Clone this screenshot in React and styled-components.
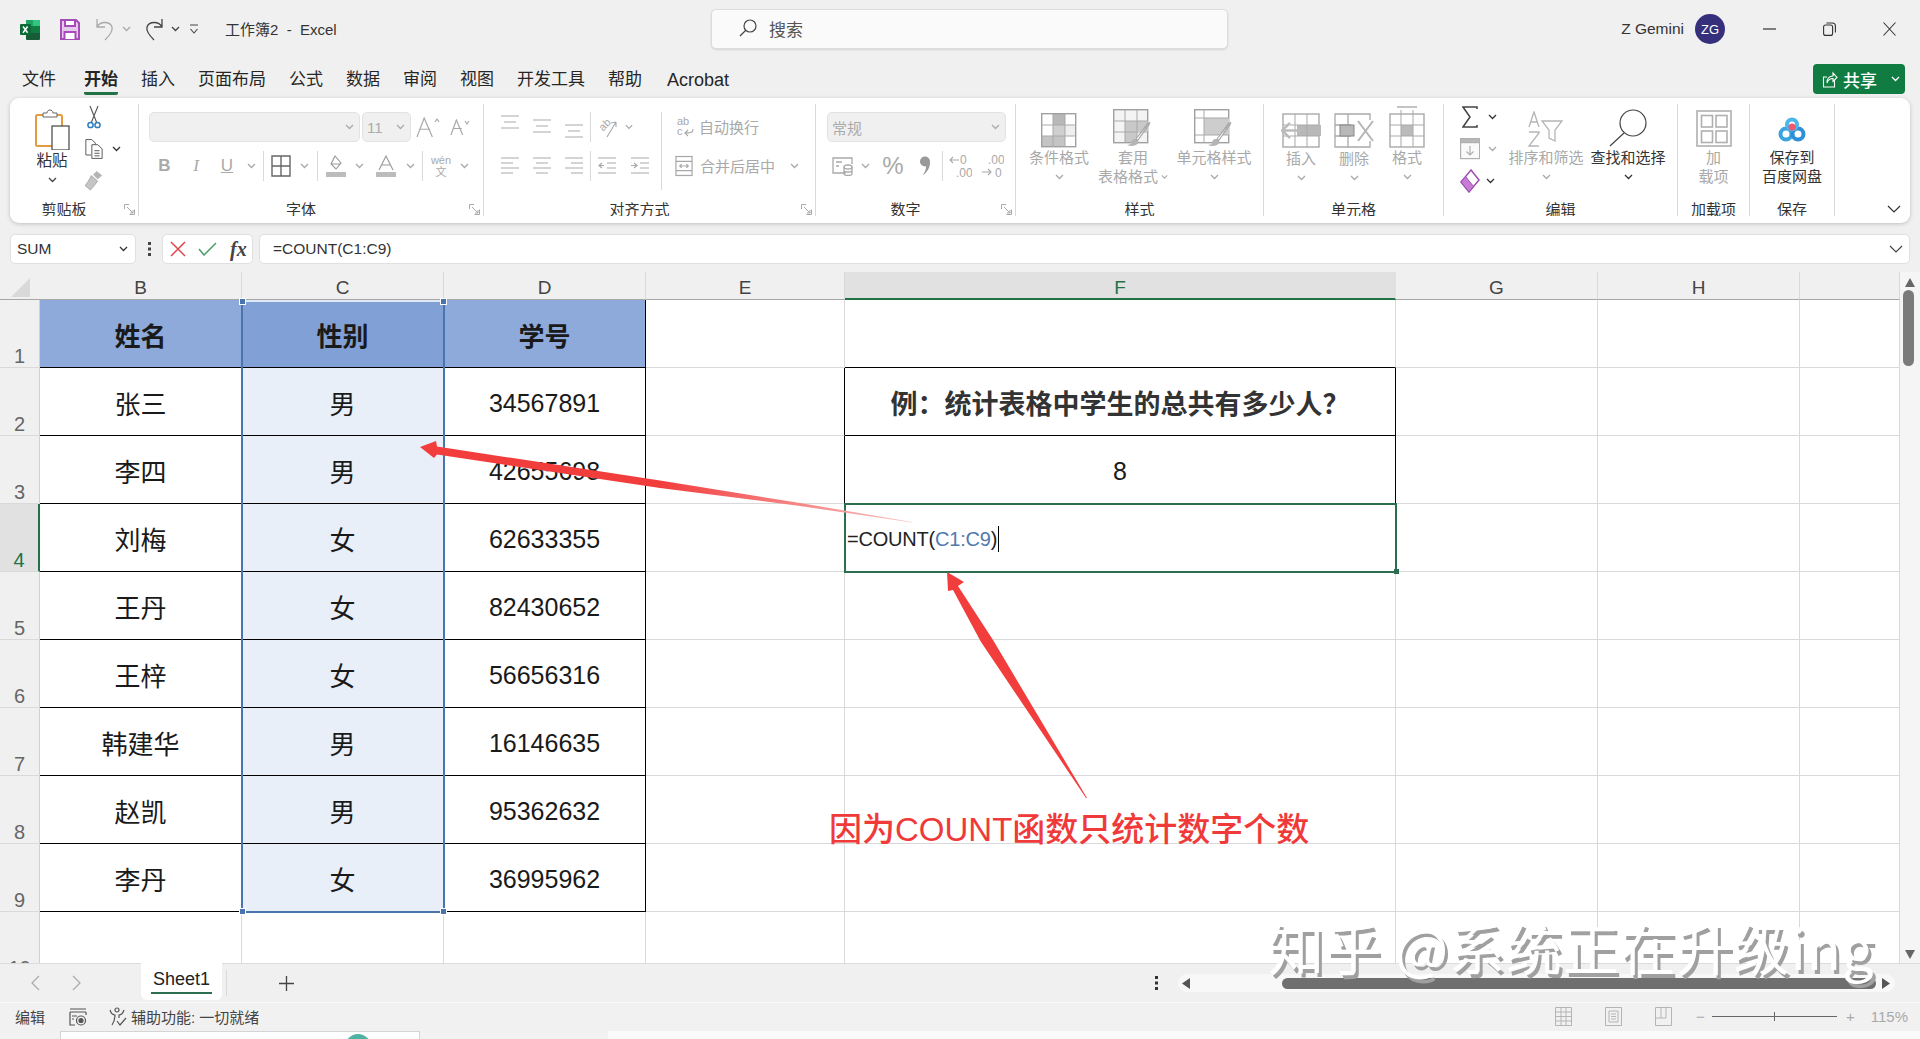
import React from 'react';
import styled, { createGlobalStyle } from 'styled-components';

const GlobalStyle = createGlobalStyle`
  html, body { margin: 0; padding: 0; background: #f0f0f0; }
  * { box-sizing: border-box; }
  body { font-family: "Liberation Sans", "Noto Sans CJK SC", sans-serif; color: #333; }
`;

const Page = styled.div`
  position: relative;
  width: 1920px;
  height: 1039px;
  overflow: hidden;
  display: flex;
  flex-direction: column;
  background: #f0f0f0;
`;

/* ---------- title bar ---------- */
const TitleBar = styled.div`
  height: 60px;
  flex: none;
  display: flex;
  align-items: center;
  padding-bottom: 2px;
`;
const Slot = styled.div`
  width: ${p => p.$w}px;
  flex: none;
  display: flex;
  align-items: center;
  justify-content: center;
  color: ${p => (p.$off ? '#a9a9a9' : '#444')};
`;
const Spacer = styled.div`
  width: ${p => p.$w}px;
  flex: none;
`;
const Title = styled.span`
  width: 486px;
  flex: none;
  font-size: 15px;
  color: #333;
  white-space: pre;
  margin-top: -2px;
`;
const SearchBox = styled.div`
  width: 517px;
  height: 40px;
  flex: none;
  display: flex;
  align-items: center;
  gap: 12px;
  padding: 0 0 2px 27px;
  background: #fafafa;
  border: 1px solid #dcdcdc;
  border-radius: 5px;
  box-shadow: 0 1px 2px rgba(0, 0, 0, 0.12);
  font-size: 17px;
  color: #555;
`;
const UserName = styled.span`
  width: 456px;
  flex: none;
  text-align: right;
  font-size: 15.5px;
  color: #333;
`;
const Avatar = styled.div`
  width: 30px;
  height: 30px;
  flex: none;
  margin-left: 11px;
  border-radius: 50%;
  background: #352f7c;
  color: #fff;
  font-size: 13px;
  display: flex;
  align-items: center;
  justify-content: center;
`;

/* ---------- tab row ---------- */
const TabRow = styled.div`
  height: 38px;
  flex: none;
  display: flex;
  padding-left: 22px;
  position: relative;
`;
const Tab = styled.div`
  margin-right: ${p => p.$gap || 23}px;
  padding-top: 8px;
  font-size: ${p => p.$size || 17}px;
  line-height: 24px;
  color: #262626;
  font-weight: ${p => (p.$active ? 700 : 400)};
  border-bottom: ${p => (p.$active ? '3px solid #217346' : 'none')};
  height: ${p => (p.$active ? '35px' : '38px')};
  border-radius: 0 0 2px 2px;
`;
const ShareButton = styled.div`
  position: absolute;
  right: 15px;
  top: 4px;
  width: 92px;
  height: 30px;
  display: flex;
  align-items: center;
  gap: 5px;
  padding-left: 9px;
  background: #107c41;
  border-radius: 4px;
  color: #fff;
  font-size: 17px;
  font-weight: 500;
`;

/* ---------- ribbon ---------- */
const Ribbon = styled.div`
  height: 125px;
  flex: none;
  margin: 0 10px;
  padding: 6px 0 7px;
  display: flex;
  background: #fff;
  border-radius: 9px;
  box-shadow: 0 1px 4px rgba(0, 0, 0, 0.2);
`;
const Group = styled.div`
  width: ${p => p.$w}px;
  height: 112px;
  flex: ${p => (p.$last ? '1' : 'none')};
  overflow: hidden;
  display: flex;
  flex-direction: column;
  border-right: ${p => (p.$last ? 'none' : '1px solid #d9d9d9')};
`;
const GroupBody = styled.div`
  height: 96px;
  flex: none;
  display: flex;
`;
const GroupLabelRow = styled.div`
  height: 18px;
  flex: none;
  display: flex;
  align-items: center;
  justify-content: ${p => (p.$end ? 'flex-end' : 'flex-start')};
  padding-right: ${p => (p.$end ? '8px' : '0')};
`;
const GroupLabel = styled.div`
  flex: 1;
  text-align: center;
  font-size: 15px;
  line-height: 18px;
  padding-top: 1px;
  color: #333;
`;
const Launcher = styled.div`
  width: 20px;
  flex: none;
  display: flex;
  justify-content: center;
  color: #a9a9a9;
  padding-left: 2px;
`;
const Stack = styled.div`
  display: flex;
  flex-direction: column;
  gap: ${p => p.$gap}px;
  padding-top: ${p => p.$top}px;
  width: ${p => (p.$w ? `${p.$w}px` : 'auto')};
  flex: none;
`;
const ToolRow = styled.div`
  height: ${p => p.$h || 30}px;
  display: flex;
  align-items: center;
`;
const Combo = styled.div`
  width: ${p => p.$w}px;
  height: 30px;
  flex: none;
  margin-right: ${p => p.$mr || 0}px;
  display: flex;
  align-items: center;
  justify-content: space-between;
  padding: 0 5px 0 4px;
  background: #f0f0f0;
  border: 1px solid #e2e2e2;
  border-radius: 5px;
  color: #ababab;
  font-size: 15px;
`;
const Sep = styled.div`
  width: 1px;
  height: ${p => p.$h || 30}px;
  flex: none;
  margin: 0 ${p => p.$mr || 0}px 0 ${p => p.$ml || 0}px;
  background: #d9d9d9;
  align-self: ${p => (p.$top ? 'flex-start' : 'center')};
`;
const ToolText = styled.span`
  font-size: 15px;
  color: #a9a9a9;
  white-space: nowrap;
  margin-top: -2px;
`;
const BigButton = styled.div`
  width: ${p => p.$w}px;
  flex: none;
  display: flex;
  flex-direction: column;
  align-items: center;
  padding-top: ${p => p.$top ?? 4}px;
  padding-left: ${p => p.$pl || 0}px;
  color: ${p => (p.$off ? '#a9a9a9' : '#333')};
`;
const BigIcon = styled.div`
  height: ${p => p.$h || 40}px;
  flex: none;
  display: flex;
  align-items: center;
  justify-content: center;
  color: ${p => (p.$off ? '#a9a9a9' : '#444')};
`;
const BigLabel = styled.div`
  font-size: ${p => p.$size || 15}px;
  line-height: ${p => p.$lh || 19}px;
  height: ${p => p.$lh || 19}px;
  white-space: nowrap;
  display: flex;
  align-items: center;
  justify-content: center;
  gap: 3px;
`;
const FontMark = styled(Slot)`
  font-size: 17px;
  font-weight: ${p => (p.$bold ? 700 : 400)};
  font-style: ${p => (p.$italic ? 'italic' : 'normal')};
  font-family: ${p => (p.$italic ? '"Liberation Serif", serif' : 'inherit')};
  text-decoration: ${p => (p.$under ? 'underline' : 'none')};
`;
const PhoneticMark = styled(Slot)`
  flex-direction: column;
  font-size: 11px;
  line-height: 12px;
`;
const PercentMark = styled(Slot)`
  font-size: 24px;
`;

/* ---------- formula bar ---------- */
const FormulaBar = styled.div`
  height: 30px;
  flex: none;
  margin: 11px 10px 8px;
  display: flex;
`;
const NameBox = styled.div`
  width: 126px;
  flex: none;
  display: flex;
  align-items: center;
  justify-content: space-between;
  padding: 0 6px;
  background: #fff;
  border: 1px solid #e0e0e0;
  border-radius: 5px;
  font-size: 15.5px;
  color: #333;
`;
const Grip = styled.div`
  width: 26px;
  flex: none;
  display: flex;
  align-items: center;
  justify-content: center;
  color: #444;
`;
const FxBox = styled.div`
  width: 91px;
  flex: none;
  display: flex;
  align-items: center;
  padding-left: 7px;
  gap: 12px;
  background: #fff;
  border: 1px solid #e0e0e0;
  border-radius: 5px;
`;
const FxMark = styled.span`
  font-family: "Liberation Serif", serif;
  font-style: italic;
  font-weight: 700;
  font-size: 20px;
  color: #444;
  margin-left: 1px;
`;
const FormulaInput = styled.div`
  flex: 1;
  margin-left: 6px;
  display: flex;
  align-items: center;
  justify-content: space-between;
  padding: 0 6px 0 13px;
  background: #fff;
  border: 1px solid #e0e0e0;
  border-radius: 5px;
  font-size: 15.5px;
  color: #333;
`;

/* ---------- sheet ---------- */
const SheetArea = styled.div`
  height: 691px;
  flex: none;
  display: flex;
  overflow: hidden;
`;
const SheetGrid = styled.div`
  position: relative;
  width: 1900px;
  flex: none;
  display: grid;
  grid-template-columns: 40px 202px 202px 202px 199px 551px 202px 202px 100px;
  grid-template-rows: 28px repeat(10, 68px);
  background: #fff;
`;
const Corner = styled.div`
  background: #f0f0f0;
  border-bottom: 1px solid #a6a6a6;
  display: flex;
  align-items: flex-end;
  justify-content: center;
  padding-bottom: 2px;
`;
const ColHead = styled.div`
  display: flex;
  align-items: center;
  justify-content: center;
  font-size: 19px;
  padding-top: 5px;
  color: ${p => (p.$active ? '#217346' : '#444')};
  background: ${p => (p.$active ? '#e1e1e1' : '#f0f0f0')};
  border-right: 1px solid ${p => (p.$active ? '#e1e1e1' : '#d9d9d9')};
  border-bottom: ${p => (p.$active ? '2px solid #217346' : '1px solid #a6a6a6')};
`;
const RowHead = styled.div`
  display: flex;
  align-items: flex-end;
  justify-content: center;
  font-size: 20px;
  line-height: 22px;
  color: ${p => (p.$active ? '#217346' : '#666')};
  background: ${p => (p.$active ? '#e1e1e1' : '#f0f0f0')};
  border-right: ${p => (p.$active ? '2px solid #217346' : '1px solid #d0d0d0')};
  border-bottom: 1px solid #d9d9d9;
`;
const Cell = styled.div`
  display: flex;
  align-items: center;
  justify-content: center;
  padding-top: ${p => (p.$num ? 4 : 2)}px;
  font-size: ${p => (p.$num ? 25 : 26)}px;
  font-weight: ${p => (p.$head ? 700 : 400)};
  color: #1a1a1a;
  background: ${p => p.$bg || '#fff'};
  border-right: 1px solid ${p => (p.$right ? '#000' : '#d9d9d9')};
  border-bottom: 1px solid ${p => (p.$bottom ? '#000' : '#d9d9d9')};
`;
const QuestionText = styled.span`
  font-weight: 700;
  font-size: 27px;
  color: #333;
  white-space: nowrap;
`;
const ActiveCell = styled.div`
  position: relative;
  z-index: 2;
  display: flex;
  align-items: center;
  padding: 2px 0 0 2px;
  font-size: 20px;
  letter-spacing: -0.2px;
  color: #222;
  background: #fff;
  outline: 2px solid #2c6e50;
  outline-offset: -1px;
`;
const RefText = styled.span`
  color: #4f79ad;
`;
const Caret = styled.span`
  width: 1px;
  height: 26px;
  margin-left: 1px;
  background: #000;
`;
const FillHandle = styled.i`
  position: absolute;
  right: -3px;
  bottom: -2px;
  width: 5px;
  height: 5px;
  background: #2c6e50;
`;
const Selection = styled.div`
  position: absolute;
  left: 241px;
  top: 28px;
  width: 204px;
  height: 613px;
  z-index: 1;
  pointer-events: none;
  border: 2px solid #4a74ad;
  border-top-color: #dfe8f6;
`;
const SelHandle = styled.i`
  position: absolute;
  width: 7px;
  height: 7px;
  background: #4a74ad;
  border: 1px solid #fff;
  left: ${p => (p.$side === 'l' ? '-4px' : 'auto')};
  right: ${p => (p.$side === 'r' ? '-4px' : 'auto')};
  top: ${p => (p.$pos === 't' ? '-4px' : 'auto')};
  bottom: ${p => (p.$pos === 'b' ? '-4px' : 'auto')};
`;
const VScroll = styled.div`
  width: 20px;
  flex: none;
  display: flex;
  flex-direction: column;
  align-items: center;
  background: #f5f5f5;
  padding-top: 6px;
`;
const VThumb = styled.div`
  width: 11px;
  height: 76px;
  margin-top: 3px;
  margin-left: -3px;
  border-radius: 6px;
  background: #7b7b7b;
`;
const ArrowMark = styled.div`
  margin-top: ${p => (p.$push ? 'auto' : '0')};
  margin-bottom: ${p => (p.$push ? '4px' : '0')};
  display: flex;
  color: #666;
`;

/* ---------- sheet tabs, status ---------- */
const SheetBar = styled.div`
  height: 40px;
  flex: none;
  display: flex;
  align-items: center;
  border-top: 1px solid #dcdcdc;
  border-bottom: 1px solid #fafafa;
  background: #f0f0f0;
`;
const SheetTab = styled.div`
  width: 81px;
  height: 37px;
  flex: none;
  align-self: flex-start;
  margin-top: -1px;
  position: relative;
  display: flex;
  justify-content: center;
  padding-top: 4px;
  background: #fff;
  border-radius: 0 0 6px 6px;
  font-size: 18px;
  line-height: 24px;
  color: #222;
`;
const TabMark = styled.i`
  position: absolute;
  left: 10px;
  right: 10px;
  bottom: 6px;
  height: 2px;
  background: #2c6e50;
`;
const HTrack = styled.div`
  width: 717px;
  height: 18px;
  flex: none;
  display: flex;
  align-items: center;
  border-radius: 9px;
  background: #f8f8f8;
  color: #555;
`;
const HThumb = styled.div`
  width: 594px;
  height: 11px;
  flex: none;
  border-radius: 6px;
  background: #6f6f6f;
`;
const StatusBar = styled.div`
  height: 28px;
  flex: none;
  display: flex;
  align-items: center;
  background: #f1f1f1;
  font-size: 15px;
  padding-bottom: 1px;
  color: #444;
`;
const ZoomTrack = styled.div`
  width: 125px;
  height: 1px;
  flex: none;
  position: relative;
  background: #666;
  margin: 0 6px;
`;
const ZoomTick = styled.i`
  position: absolute;
  left: 62px;
  top: -4px;
  width: 1px;
  height: 9px;
  background: #666;
`;
const TaskStrip = styled.div`
  height: 8px;
  flex: none;
  position: relative;
  display: flex;
  background: linear-gradient(to right, #f2f2f2 608px, #fafafa 608px);
  overflow: hidden;
`;
const TaskWindow = styled.div`
  width: 360px;
  margin-left: 60px;
  flex: none;
  position: relative;
  background: #fff;
  border: 1px solid #d5d5d5;
  border-bottom: none;
`;
const TaskRing = styled.i`
  position: absolute;
  left: 284px;
  top: 2px;
  width: 26px;
  height: 26px;
  border-radius: 50%;
  border: 5px solid #4fb3a4;
`;

/* ---------- annotations ---------- */
const Annotations = styled.svg`
  position: absolute;
  inset: 0;
  z-index: 5;
  pointer-events: none;
`;
const RedNote = styled.div`
  position: absolute;
  left: 829px;
  top: 808px;
  z-index: 6;
  font-size: 33px;
  line-height: 44px;
  font-weight: 500;
  color: #f03a3a;
  white-space: nowrap;
`;
const Watermark = styled.div`
  position: absolute;
  left: 1268px;
  top: 908px;
  z-index: 7;
  font-family: "Noto Sans CJK SC", sans-serif;
  font-size: 56px;
  line-height: 76px;
  letter-spacing: 0.9px;
  color: #fff;
  white-space: pre;
  text-shadow: 3px 4px 0 #a0a0a0;
`;

/* ---------- icons ---------- */
const Chev = ({ w = 9 }) => (
  <svg width={w} height="6" viewBox="0 0 9 6" fill="none" stroke="currentColor" strokeWidth="1.3"><path d="M1 1l3.5 3.5L8 1" /></svg>
);
const CornerMark = () => (
  <svg width="11" height="11" viewBox="0 0 11 11" fill="none" stroke="currentColor"><path d="M10.5 5.5v5h-5M.5 5V.5H5M3 3l6 6M9 6v3H6" /></svg>
);
const ExcelLogo = () => (
  <svg width="20" height="21" viewBox="0 0 20 21">
    <path d="M6 1h9l5 0v6h-14z" fill="#21a366" />
    <path d="M6 7h14v7H6z" fill="#107c41" />
    <path d="M6 14h14v6a1 1 0 0 1-1 1H7a1 1 0 0 1-1-1z" fill="#185c37" />
    <path d="M13 1h6a1 1 0 0 1 1 1v5h-7z" fill="#33c481" />
    <rect x="0" y="5" width="11" height="11" rx="1" fill="#0b6a37" />
    <path d="M3 7.5l4.6 6.2M7.6 7.5L3 13.7" stroke="#fff" strokeWidth="1.5" />
  </svg>
);
const SaveIcon = () => (
  <svg width="20" height="21" viewBox="0 0 20 21" fill="none" stroke="#a64cb9" strokeWidth="2"><path d="M1 1h15l3 3v16H1z" fill="#e8c9ee" /><path d="M5 1h10v6H5z" fill="#fff" /><path d="M4.5 20v-7h11v7" fill="#fff" /></svg>
);
const UndoIcon = ({ flip }) => (
  <svg width="20" height="24" viewBox="0 0 20 24" fill="none" stroke="currentColor" strokeWidth="1.3" style={flip ? { transform: 'scaleX(-1)' } : undefined}>
    <path d="M2 2v8h8M2 10c3-6 13-6 15 0 1 4-2 8-7 13" />
  </svg>
);
const QatIcon = () => (
  <svg width="10" height="11" viewBox="0 0 10 11" fill="none" stroke="#444" strokeWidth="1.1"><path d="M1 1h8M1.5 5l3.5 4 3.5-4" /></svg>
);
const SearchIcon = ({ size = 18 }) => (
  <svg width={size} height={size} viewBox="0 0 18 18" fill="none" stroke="#444" strokeWidth="1.2"><circle cx="11" cy="7" r="6" /><path d="M6.8 11.3L1 17" /></svg>
);
const MinIcon = () => <svg width="13" height="2" viewBox="0 0 13 2"><path d="M0 1h13" stroke="#333" strokeWidth="1.2" /></svg>;
const RestoreIcon = () => (
  <svg width="13" height="14" viewBox="0 0 13 14" fill="none" stroke="#333" strokeWidth="1.1"><rect x=".6" y="3" width="9" height="10.4" rx="2" /><path d="M3.4 1h6a3 3 0 0 1 3 3v6.4" /></svg>
);
const CloseIcon = () => (
  <svg width="13" height="14" viewBox="0 0 13 14" stroke="#333" strokeWidth="1.1"><path d="M.5.5l12 13M12.500.5l-12 13" /></svg>
);
const ShareIcon = () => (
  <svg width="16" height="17" viewBox="0 0 16 17" fill="none" stroke="#fff" strokeWidth="1.1"><path d="M5 6H1.500v10h11V9M5 12c0-4 2-7 6-7V2l4 4.500-4 4V7.500c-3 0-5 1.500-6 4.500z" /></svg>
);
const PasteIcon = () => (
  <svg width="35" height="42" viewBox="0 0 35 42" fill="none">
    <rect x="1" y="7" width="26" height="31" rx="1.500" fill="#fff" stroke="#e39b3e" strokeWidth="2" />
    <path d="M8 7V5h4c0-4 6-4 6 0h4v4H8z" fill="#fff" stroke="#666" />
    <rect x="17" y="18" width="17" height="24" fill="#fff" stroke="#444" strokeWidth="1.200" />
  </svg>
);
const CutIcon = () => (
  <svg width="14" height="24" viewBox="0 0 14 24" fill="none"><path d="M3 1l6.500 16M11 1L4.500 17" stroke="#555" strokeWidth="1.100" /><circle cx="3.500" cy="20" r="2.600" stroke="#2f7dbd" strokeWidth="1.500" /><circle cx="10.500" cy="20" r="2.600" stroke="#2f7dbd" strokeWidth="1.500" /></svg>
);
const CopyIcon = () => (
  <svg width="21" height="24" viewBox="0 0 21 24" fill="none" stroke="#555" strokeWidth="1.100"><path d="M7 19H1V1h7l4 4v2" /><path d="M8 7h7l5 5v11H8zM11 14h6M11 17h6M11 20h6" fill="#fff" /></svg>
);
const BrushIcon = () => (
  <svg width="20" height="22" viewBox="0 0 20 22" fill="#b5b5b5"><path d="M13 0l6 5-5 4-5-5z" /><path d="M7 5l7 6c-2 3-5 7-8 10L0 16c3-3 5-7 7-11z" fill="#c5c5c5" stroke="#999" strokeWidth=".8" /></svg>
);
const GrowA = ({ size, up }) => (
  <svg width={size + 8} height={size + 2} viewBox={`0 0 ${size + 8} ${size + 2}`} fill="none" stroke="currentColor" strokeWidth="1.200">
    <path d={`M1 ${size + 2}L${size / 2.2} 1l${size / 2.2} ${size + 1}M4 ${size * 0.68}h${size / 1.8}`} />
    <path d={up ? `M${size + 1} 5l2-3 2 3` : `M${size + 1} 2l2 3 2-3`} />
  </svg>
);
const BorderIcon = () => (
  <svg width="20" height="22" viewBox="0 0 20 22" fill="none" stroke="#666" strokeWidth="1.400"><path d="M1 1h18v20H1zM10 1v20M1 11h18" /></svg>
);
const FillIcon = () => (
  <svg width="20" height="22" viewBox="0 0 20 22" fill="none" stroke="#999" strokeWidth="1.100"><path d="M9 1l6 7-5 6-5-5zM5 9h9" /><rect x="0" y="17" width="20" height="5" fill="#bcbcbc" stroke="none" /></svg>
);
const ColorA = () => (
  <svg width="20" height="22" viewBox="0 0 20 22" fill="none" stroke="#999" strokeWidth="1.100"><path d="M3 15L10 1l7 14M6 10h8" /><rect x="0" y="17" width="20" height="5" fill="#bcbcbc" stroke="none" /></svg>
);
const VAlign = ({ y }) => (
  <svg width="18" height="24" viewBox="0 0 18 24" fill="none" stroke="currentColor" strokeWidth="1.200">
    <path d={`M0 ${y}h18M3 ${y + 6}h12M0 ${y + 12}h18`} />
  </svg>
);
const AlignRows = ({ side }) => {
  const x = side === 'l' ? 0 : side === 'c' ? 3 : 6;
  return (
    <svg width="18" height="20" viewBox="0 0 18 20" fill="none" stroke="currentColor" strokeWidth="1.200">
      <path d={`M0 2h18M${x} 7h12M0 12h18M${x} 17h12`} />
    </svg>
  );
};
const OrientIcon = () => (
  <svg width="22" height="24" viewBox="0 0 22 24" fill="none" stroke="currentColor" strokeWidth="1.100">
    <path d="M10 22l9-15M19 7l-5 1M19 7v5" />
    <text x="2" y="15" fontSize="11" fontFamily="Liberation Sans" fill="currentColor" stroke="none" transform="rotate(-45 6 11)">ab</text>
  </svg>
);
const IndentIcon = ({ right }) => (
  <svg width="18" height="20" viewBox="0 0 18 20" fill="none" stroke="currentColor" strokeWidth="1.200">
    <path d="M0 2h18M9 7h9M9 12h9M0 17h18" />
    <path d={right ? 'M0 9.500h5M3 7l3 2.500L3 12' : 'M6 9.500H1M4 7L1 9.500 4 12'} />
  </svg>
);
const WrapIcon = () => (
  <svg width="18" height="22" viewBox="0 0 18 22" fill="none" stroke="currentColor" strokeWidth="1.100">
    <path d="M16 13c0 4-3 4-8 4M11 14l-3 3 3 3" />
    <text x="0" y="9" fontSize="11" fontFamily="Liberation Sans" fill="currentColor" stroke="none">ab</text>
    <text x="0" y="19" fontSize="11" fontFamily="Liberation Sans" fill="currentColor" stroke="none">c</text>
  </svg>
);
const MergeIcon = () => (
  <svg width="19" height="22" viewBox="0 0 19 22" fill="none" stroke="currentColor" strokeWidth="1.300">
    <rect x="1" y="1" width="17" height="20" /><path d="M1 6h17M1 16h17M5 11h9M7 9l-2 2 2 2M12 9l2 2-2 2" />
  </svg>
);
const AccountIcon = () => (
  <svg width="21" height="20" viewBox="0 0 21 20" fill="none" stroke="currentColor" strokeWidth="1.300">
    <path d="M14 17H1V2h19v6M4 6h6M4 10h3" /><ellipse cx="16" cy="11" rx="4" ry="2" /><path d="M12 11v7c0 2 8 2 8 0v-7M12 14.500c0 2 8 2 8 0" />
  </svg>
);
const CommaIcon = () => (
  <svg width="12" height="20" viewBox="0 0 12 20" fill="#999"><circle cx="6" cy="5.500" r="5" /><path d="M11 5.500c.5 6-3 11-7.500 14 2.500-3.500 3.500-6 3.500-9z" /></svg>
);
const DecimalIcon = ({ more }) => (
  <svg width="24" height="26" viewBox="0 0 24 26" fill="none" stroke="currentColor" strokeWidth="1.100">
    <text x={more ? 8 : 12} y="11" fontSize="12" fontFamily="Liberation Sans" fill="currentColor" stroke="none">{more ? '.00' : '0'}</text>
    <text x={more ? 15 : 8} y="24" fontSize="12" fontFamily="Liberation Sans" fill="currentColor" stroke="none">{more ? '0' : '.00'}</text>
    <path d={more ? 'M2 19h9M8 16l3 3-3 3' : 'M11 7H2M5 4L2 7l3 3'} />
  </svg>
);
const StylePaint = () => (
  <g>
    <path d="M36 14L23 32" stroke="#a9a9a9" strokeWidth="3" fill="none" />
    <path d="M37 13l-12 18-2-1z" fill="#fff" stroke="#a9a9a9" />
    <path d="M22 30c-3 0-4 2-4 5l-4 1c4 2 10 1 12-3z" fill="#b5b5b5" />
  </g>
);
const CondIcon = () => (
  <svg width="36" height="35" viewBox="0 0 36 35" fill="none">
    <rect x="12" y="1" width="12" height="11" fill="#b8b8b8" />
    <rect x="12" y="12" width="12" height="11" fill="#cfcfcf" />
    <rect x="1" y="23" width="23" height="11" fill="#c4c4c4" />
    <rect x="24" y="12" width="11" height="11" fill="#efefef" />
    <rect x=".7" y=".7" width="34" height="33" stroke="#a0a0a0" strokeWidth="1.400" />
    <path d="M12 1v33M24 1v33M1 12h34M1 23h34" stroke="#a9a9a9" />
  </svg>
);
const TableStyleIcon = () => (
  <svg width="40" height="42" viewBox="0 0 40 42" fill="none">
    <rect x=".7" y=".7" width="34" height="33" fill="#f4f4f4" stroke="#a0a0a0" strokeWidth="1.400" />
    <rect x="12" y="12" width="23" height="10" fill="#c9c9c9" />
    <rect x="12" y="22" width="12" height="11" fill="#c9c9c9" />
    <path d="M12 1v33M24 1v33M1 12h34M1 23h34" stroke="#a9a9a9" />
    <StylePaint />
  </svg>
);
const CellStyleIcon = () => (
  <svg width="40" height="42" viewBox="0 0 40 42" fill="none">
    <rect x=".7" y=".7" width="34" height="33" fill="#fff" stroke="#a0a0a0" strokeWidth="1.400" />
    <rect x="10" y="9" width="25" height="17" fill="#cdcdcd" />
    <path d="M1 9h34M10 1v33M1 26h34" stroke="#a9a9a9" />
    <StylePaint />
  </svg>
);
const InsertCells = () => (
  <svg width="40" height="36" viewBox="0 0 40 36" fill="none">
    <rect x="2" y="1" width="36" height="33" stroke="#a9a9a9" strokeWidth="1.400" />
    <rect x="16" y="12" width="24" height="11" fill="#b8b8b8" />
    <path d="M14 1v33M26 1v33M2 12h36M2 23h36" stroke="#a9a9a9" />
    <path d="M20 17.500H2M9 10l-8 7.500L9 25" stroke="#bbb" strokeWidth="2.500" fill="#fff" />
  </svg>
);
const DeleteCells = () => (
  <svg width="40" height="36" viewBox="0 0 40 36" fill="none">
    <path d="M26 1H1v33h25M26 1h10v6M36 28v6H26M1 12h16M1 23h16M14 1v33" stroke="#a9a9a9" strokeWidth="1.300" />
    <rect x="6" y="12" width="14" height="11" fill="#b8b8b8" stroke="#888" />
    <path d="M24 8l15 20M39 8L24 28" stroke="#b5b5b5" strokeWidth="2" />
  </svg>
);
const FormatCells = () => (
  <svg width="36" height="44" viewBox="0 0 36 44" fill="none">
    <path d="M8 2h20" stroke="#a9a9a9" strokeWidth="1.400" />
    <rect x="1" y="9" width="34" height="33" stroke="#a9a9a9" strokeWidth="1.400" />
    <rect x="12" y="20" width="12" height="11" fill="#bbb" />
    <path d="M12 5v37M24 5v37M1 20h34M1 31h34" stroke="#a9a9a9" />
  </svg>
);
const SigmaIcon = () => (
  <svg width="16" height="22" viewBox="0 0 16 22" fill="none" stroke="#444" strokeWidth="1.500"><path d="M15 3V1H1l7 10-7 10h14v-2" /></svg>
);
const FillDown = () => (
  <svg width="20" height="22" viewBox="0 0 20 22" fill="none" stroke="#b0b0b0" strokeWidth="1.200"><rect x=".6" y=".6" width="19" height="20" fill="#fafafa" /><rect x=".6" y=".6" width="19" height="4" fill="#b8b8b8" /><path d="M10 8v9M6.500 13.500L10 17l3.500-3.500" /></svg>
);
const EraserIcon = () => (
  <svg width="20" height="24" viewBox="0 0 20 24" fill="none"><path d="M11 1l8 10-10 12-8-10z" fill="#fff" stroke="#9c4fb0" strokeWidth="1.500" /><path d="M5.500 7.500l8 10L9 23 1 13z" fill="#c77bd6" stroke="#9c4fb0" strokeWidth="1" /></svg>
);
const SortIcon = () => (
  <svg width="36" height="36" viewBox="0 0 36 36" fill="none" stroke="#b5b5b5" strokeWidth="1.300">
    <path d="M1 16L6 1l5 15M3 11h6M1 21h10v1L1 35h10" />
    <path d="M14 10h20l-7 9v11l-6 -3v-8z" fill="#fff" />
  </svg>
);
const FindIcon = () => (
  <svg width="38" height="38" viewBox="0 0 38 38" fill="none" stroke="#444" strokeWidth="1.200"><circle cx="24" cy="14" r="13" /><path d="M15 24L1 37" /></svg>
);
const AddinIcon = () => (
  <svg width="36" height="37" viewBox="0 0 36 37" fill="none" stroke="#b0b0b0" strokeWidth="1.600"><rect x="1" y="1" width="34" height="35" /><rect x="5.500" y="5.500" width="11" height="11.500" /><rect x="20" y="5.500" width="11" height="11.500" /><rect x="5.500" y="21" width="11" height="11.500" /><rect x="20" y="21" width="11" height="11.500" /></svg>
);
const BaiduIcon = () => (
  <svg width="28" height="26" viewBox="0 0 28 26" fill="none" strokeWidth="4">
    <circle cx="8" cy="17" r="5.500" stroke="#3aa4e0" />
    <circle cx="20" cy="17" r="5.500" stroke="#2c8fd8" />
    <circle cx="14" cy="7.500" r="5" stroke="#4cb7e8" />
    <circle cx="14" cy="10" r="3.500" fill="#f0566e" stroke="none" />
  </svg>
);
const CrossIcon = () => <svg width="16" height="16" viewBox="0 0 16 16" stroke="#e0474c" strokeWidth="1.500"><path d="M1 1l14 14M15 1L1 15" /></svg>;
const CheckIcon = () => <svg width="19" height="14" viewBox="0 0 19 14" fill="none" stroke="#4b9e6a" strokeWidth="1.500"><path d="M1 7l5 6L18 1" /></svg>;
const GripIcon = ({ c }) => (
  <svg width="3" height="14" viewBox="0 0 3 14" fill={c || 'currentColor'}><rect width="3" height="3" /><rect y="5.500" width="3" height="3" /><rect y="11" width="3" height="3" /></svg>
);
const SmallTriangle = ({ d }) => {
  const paths = { u: 'M5 0l5 9H0z', d: 'M0 0h10L5 9z', l: 'M8 0v11L0 5.500z', r: 'M0 0l8 5.500L0 11z' };
  const horizontal = d === 'l' || d === 'r';
  return (
    <svg width={horizontal ? 8 : 10} height={horizontal ? 11 : 9} viewBox={horizontal ? '0 0 8 11' : '0 0 10 9'} fill="currentColor"><path d={paths[d]} /></svg>
  );
};
const Angle = ({ left }) => (
  <svg width="9" height="16" viewBox="0 0 9 16" fill="none" stroke="#aaa" strokeWidth="1.200"><path d={left ? 'M8 1L1 8l7 7' : 'M1 1l7 7-7 7'} /></svg>
);
const PlusIcon = () => <svg width="15" height="15" viewBox="0 0 15 15" stroke="#444" strokeWidth="1.300"><path d="M7.500 0v15M0 7.500h15" /></svg>;
const MacroIcon = () => (
  <svg width="18" height="18" viewBox="0 0 18 18" fill="none" stroke="#555" strokeWidth="1.200"><path d="M1 1h16M1 4h16M1 4v13h5M17 4v3M3 8h5M3 11h2" /><circle cx="12" cy="12.500" r="4.500" /><circle cx="12" cy="12.500" r="2" fill="#555" /></svg>
);
const AccessIcon = () => (
  <svg width="18" height="20" viewBox="0 0 18 20" fill="none" stroke="#555" strokeWidth="1.200"><circle cx="8" cy="3" r="2" /><path d="M1 3c1 3 3 5 5 5 0 3-1 7-3 10M15 3c-1 3-3 5-5 5v3M8 14l3 4 6-7" /></svg>
);
const ViewNormal = () => (
  <svg width="17" height="19" viewBox="0 0 17 19" fill="none" stroke="#b5b5b5"><path d="M.5.500h16v18H.5zM6 .5v18M11 .5v18M.5 5h16M.5 9.500h16M.5 14h16" /></svg>
);
const ViewLayout = () => (
  <svg width="17" height="19" viewBox="0 0 17 19" fill="none" stroke="#b5b5b5"><path d="M.5.500h16v18H.5zM4 4h9v11H4zM6 7h5M6 9.500h5M6 12h5" /></svg>
);
const ViewBreak = () => (
  <svg width="17" height="19" viewBox="0 0 17 19" fill="none" stroke="#b5b5b5"><path d="M.5.500h16v18H.5zM6 .5V11M11 .5V11M.5 11h10.500" /></svg>
);
const SheetCorner = () => (
  <svg width="19" height="19" viewBox="0 0 19 19"><path d="M19 0v19H0z" fill="#d9d9d9" /></svg>
);

const columns = ['B', 'C', 'D', 'E', 'F', 'G', 'H'];
const students = [
  ['张三', '男', '34567891'],
  ['李四', '男', '42655698'],
  ['刘梅', '女', '62633355'],
  ['王丹', '女', '82430652'],
  ['王梓', '女', '56656316'],
  ['韩建华', '男', '16146635'],
  ['赵凯', '男', '95362632'],
  ['李丹', '女', '36995962'],
];

function ClipboardGroup() {
  return (
    <Group $w={129}>
      <GroupBody>
        <BigButton $w={75} $pl={9} $top={4}>
          <BigIcon $h={42}><PasteIcon /></BigIcon>
          <BigLabel $size={15.5} $lh={22}>粘贴</BigLabel>
          <BigIcon $h={16}><Chev /></BigIcon>
        </BigButton>
        <Stack $gap={6} $top={0}>
          <ToolRow $h={26}><Slot $w={18}><CutIcon /></Slot></ToolRow>
          <ToolRow $h={26}><Slot $w={18}><CopyIcon /></Slot><Spacer $w={9} /><Chev /></ToolRow>
          <ToolRow $h={26}><Slot $w={18}><BrushIcon /></Slot></ToolRow>
        </Stack>
      </GroupBody>
      <GroupLabelRow><GroupLabel>剪贴板</GroupLabel><Launcher><CornerMark /></Launcher></GroupLabelRow>
    </Group>
  );
}

function FontGroup() {
  return (
    <Group $w={345}>
      <GroupBody>
        <Stack $gap={9} $top={8}>
          <ToolRow>
            <Spacer $w={10} />
            <Combo $w={211} $mr={2}><span /><Chev /></Combo>
            <Combo $w={49}><span>11</span><Chev /></Combo>
            <Slot $w={36} $off><GrowA size={18} up /></Slot>
            <Slot $w={28} $off><GrowA size={14} /></Slot>
          </ToolRow>
          <ToolRow>
            <Spacer $w={10} />
            <FontMark $w={31} $off $bold>B</FontMark>
            <FontMark $w={32} $off $italic>I</FontMark>
            <FontMark $w={30} $off $under>U</FontMark>
            <Slot $w={18} $off><Chev /></Slot>
            <Sep $ml={3} $mr={4} />
            <Slot $w={26}><BorderIcon /></Slot>
            <Slot $w={20} $off><Chev /></Slot>
            <Sep $ml={3} $mr={4} />
            <Slot $w={28}><FillIcon /></Slot>
            <Slot $w={18} $off><Chev /></Slot>
            <Slot $w={36}><ColorA /></Slot>
            <Slot $w={12} $off><Chev /></Slot>
            <Sep $ml={6} $mr={7} />
            <PhoneticMark $w={22} $off><span>wén</span><span>文</span></PhoneticMark>
            <Slot $w={24} $off><Chev /></Slot>
          </ToolRow>
        </Stack>
      </GroupBody>
      <GroupLabelRow><GroupLabel>字体</GroupLabel><Launcher><CornerMark /></Launcher></GroupLabelRow>
    </Group>
  );
}

function AlignGroup() {
  return (
    <Group $w={332}>
      <GroupBody>
        <Stack $gap={9} $top={8}>
          <ToolRow>
            <Spacer $w={10} />
            <Slot $w={32} $off><VAlign y={1} /></Slot>
            <Slot $w={32} $off><VAlign y={5} /></Slot>
            <Slot $w={32} $off><VAlign y={10} /></Slot>
            <Sep />
            <Slot $w={34} $off><OrientIcon /></Slot>
            <Slot $w={8} $off><Chev /></Slot>
            <Spacer $w={28} />
            <Sep $h={78} $top />
            <Spacer $w={14} />
            <Slot $w={20} $off><WrapIcon /></Slot>
            <Spacer $w={3} />
            <ToolText>自动换行</ToolText>
          </ToolRow>
          <ToolRow>
            <Spacer $w={10} />
            <Slot $w={32} $off><AlignRows side="l" /></Slot>
            <Slot $w={32} $off><AlignRows side="c" /></Slot>
            <Slot $w={32} $off><AlignRows side="r" /></Slot>
            <Sep />
            <Slot $w={32} $off><IndentIcon /></Slot>
            <Slot $w={34} $off><IndentIcon right /></Slot>
            <Spacer $w={18} />
            <Slot $w={18} $off><MergeIcon /></Slot>
            <Spacer $w={7} />
            <ToolText>合并后居中</ToolText>
            <Slot $w={38} $off><Chev /></Slot>
          </ToolRow>
        </Stack>
      </GroupBody>
      <GroupLabelRow><GroupLabel>对齐方式</GroupLabel><Launcher><CornerMark /></Launcher></GroupLabelRow>
    </Group>
  );
}

function NumberGroup() {
  return (
    <Group $w={200}>
      <GroupBody>
        <Stack $gap={9} $top={8}>
          <ToolRow>
            <Spacer $w={11} />
            <Combo $w={179}><span>常规</span><Chev /></Combo>
          </ToolRow>
          <ToolRow>
            <Spacer $w={11} />
            <Slot $w={30} $off><AccountIcon /></Slot>
            <Slot $w={16} $off><Chev /></Slot>
            <PercentMark $w={40} $off>%</PercentMark>
            <Slot $w={24} $off><CommaIcon /></Slot>
            <Sep $ml={5} $mr={4} />
            <Slot $w={26} $off><DecimalIcon /></Slot>
            <Slot $w={38} $off><DecimalIcon more /></Slot>
          </ToolRow>
        </Stack>
      </GroupBody>
      <GroupLabelRow><GroupLabel>数字</GroupLabel><Launcher><CornerMark /></Launcher></GroupLabelRow>
    </Group>
  );
}

function StylesGroup() {
  return (
    <Group $w={248}>
      <GroupBody>
        <BigButton $w={86} $off $top={8}>
          <BigIcon $h={36}><CondIcon /></BigIcon>
          <BigLabel>条件格式</BigLabel>
          <BigLabel><Chev /></BigLabel>
        </BigButton>
        <BigButton $w={62} $off $top={8}>
          <BigIcon $h={36}><TableStyleIcon /></BigIcon>
          <BigLabel>套用</BigLabel>
          <BigLabel>表格格式<Chev w={7} /></BigLabel>
        </BigButton>
        <BigButton $w={100} $off $top={8}>
          <BigIcon $h={36}><CellStyleIcon /></BigIcon>
          <BigLabel>单元格样式</BigLabel>
          <BigLabel><Chev /></BigLabel>
        </BigButton>
      </GroupBody>
      <GroupLabelRow><GroupLabel>样式</GroupLabel></GroupLabelRow>
    </Group>
  );
}

function CellsGroup() {
  return (
    <Group $w={180}>
      <GroupBody>
        <BigButton $w={74} $off $top={8}>
          <BigIcon $h={37}><InsertCells /></BigIcon>
          <BigLabel>插入</BigLabel>
          <BigLabel><Chev /></BigLabel>
        </BigButton>
        <BigButton $w={32} $off $top={8}>
          <BigIcon $h={37}><DeleteCells /></BigIcon>
          <BigLabel>删除</BigLabel>
          <BigLabel><Chev /></BigLabel>
        </BigButton>
        <BigButton $w={74} $off $top={2}>
          <BigIcon $h={42}><FormatCells /></BigIcon>
          <BigLabel>格式</BigLabel>
          <BigLabel><Chev /></BigLabel>
        </BigButton>
      </GroupBody>
      <GroupLabelRow><GroupLabel>单元格</GroupLabel></GroupLabelRow>
    </Group>
  );
}

function EditGroup() {
  return (
    <Group $w={234}>
      <GroupBody>
        <Stack $gap={6} $top={0} $w={60}>
          <ToolRow $h={26}><Spacer $w={16} /><Slot $w={20}><SigmaIcon /></Slot><Spacer $w={8} /><Chev /></ToolRow>
          <ToolRow $h={26}><Spacer $w={16} /><Slot $w={20}><FillDown /></Slot><Spacer $w={8} /><Slot $w={9} $off><Chev /></Slot></ToolRow>
          <ToolRow $h={26}><Spacer $w={16} /><Slot $w={20}><EraserIcon /></Slot><Spacer $w={6} /><Chev /></ToolRow>
        </Stack>
        <BigButton $w={84} $off $top={6}>
          <BigIcon $h={38}><SortIcon /></BigIcon>
          <BigLabel>排序和筛选</BigLabel>
          <BigLabel><Chev /></BigLabel>
        </BigButton>
        <BigButton $w={80} $top={4}>
          <BigIcon $h={40}><FindIcon /></BigIcon>
          <BigLabel>查找和选择</BigLabel>
          <BigLabel><Chev /></BigLabel>
        </BigButton>
      </GroupBody>
      <GroupLabelRow><GroupLabel>编辑</GroupLabel></GroupLabelRow>
    </Group>
  );
}

function SaveGroups() {
  return (
    <>
      <Group $w={72}>
        <GroupBody>
          <BigButton $w={71} $off $top={4}>
            <BigIcon $h={40}><AddinIcon /></BigIcon>
            <BigLabel>加</BigLabel>
            <BigLabel>载项</BigLabel>
          </BigButton>
        </GroupBody>
        <GroupLabelRow><GroupLabel>加载项</GroupLabel></GroupLabelRow>
      </Group>
      <Group $w={85}>
        <GroupBody>
          <BigButton $w={84} $top={8}>
            <BigIcon $h={36}><BaiduIcon /></BigIcon>
            <BigLabel>保存到</BigLabel>
            <BigLabel>百度网盘</BigLabel>
          </BigButton>
        </GroupBody>
        <GroupLabelRow><GroupLabel>保存</GroupLabel></GroupLabelRow>
      </Group>
      <Group $last>
        <GroupBody />
        <GroupLabelRow $end><Slot $w={16}><svg width="14" height="9" viewBox="0 0 14 9" fill="none" stroke="#333" strokeWidth="1.200"><path d="M1 1l6 6 6-6" /></svg></Slot></GroupLabelRow>
      </Group>
    </>
  );
}

function Sheet() {
  return (
    <SheetArea>
      <SheetGrid>
        <Corner><SheetCorner /></Corner>
        {columns.map(c => <ColHead key={c} $active={c === 'F'}>{c}</ColHead>)}
        <ColHead />

        <RowHead>1</RowHead>
        <Cell $head $bg="#8eaadb" $right $bottom>姓名</Cell>
        <Cell $head $bg="#80a0d6" $right $bottom>性别</Cell>
        <Cell $head $bg="#8eaadb" $right $bottom>学号</Cell>
        <Cell />
        <Cell $bottom />
        <Cell /><Cell /><Cell />

        {students.map(([name, sex, id], i) => {
          const row = i + 2;
          return (
            <React.Fragment key={row}>
              <RowHead $active={row === 4}>{row}</RowHead>
              <Cell $right $bottom>{name}</Cell>
              <Cell $bg="#e9eff9" $right $bottom>{sex}</Cell>
              <Cell $num $right $bottom>{id}</Cell>
              {row === 2 && <><Cell $right /><Cell $right $bottom><QuestionText>例：统计表格中学生的总共有多少人？</QuestionText></Cell></>}
              {row === 3 && <><Cell $right /><Cell $num $right $bottom>8</Cell></>}
              {row === 4 && (
                <>
                  <Cell />
                  <ActiveCell>=COUNT(<RefText>C1:C9</RefText>)<Caret /><FillHandle /></ActiveCell>
                </>
              )}
              {row > 4 && <><Cell /><Cell /></>}
              <Cell /><Cell /><Cell />
            </React.Fragment>
          );
        })}

        <RowHead>10</RowHead>
        <Cell /><Cell /><Cell /><Cell /><Cell /><Cell /><Cell /><Cell />

        <Selection>
          <SelHandle $side="l" $pos="t" />
          <SelHandle $side="r" $pos="t" />
          <SelHandle $side="l" $pos="b" />
          <SelHandle $side="r" $pos="b" />
        </Selection>
      </SheetGrid>
      <VScroll>
        <ArrowMark><SmallTriangle d="u" /></ArrowMark>
        <VThumb />
        <ArrowMark $push><SmallTriangle d="d" /></ArrowMark>
      </VScroll>
    </SheetArea>
  );
}

export default function App() {
  return (
    <Page>
      <GlobalStyle />

      <TitleBar>
        <Spacer $w={20} />
        <Slot $w={20}><ExcelLogo /></Slot>
        <Spacer $w={20} />
        <Slot $w={20}><SaveIcon /></Slot>
        <Spacer $w={15} />
        <Slot $w={20} $off><UndoIcon /></Slot>
        <Slot $w={22} $off><Chev /></Slot>
        <Spacer $w={7} />
        <Slot $w={20}><UndoIcon flip /></Slot>
        <Slot $w={22}><Chev /></Slot>
        <Slot $w={16}><QatIcon /></Slot>
        <Spacer $w={23} />
        <Title>{'工作簿2  -  Excel'}</Title>
        <SearchBox><SearchIcon />搜索</SearchBox>
        <UserName>Z Gemini</UserName>
        <Avatar>ZG</Avatar>
        <Spacer $w={38} />
        <Slot $w={13}><MinIcon /></Slot>
        <Spacer $w={47} />
        <Slot $w={13}><RestoreIcon /></Slot>
        <Spacer $w={47} />
        <Slot $w={13}><CloseIcon /></Slot>
      </TitleBar>

      <TabRow>
        <Tab $gap={28}>文件</Tab>
        <Tab $active>开始</Tab>
        <Tab>插入</Tab>
        <Tab>页面布局</Tab>
        <Tab>公式</Tab>
        <Tab>数据</Tab>
        <Tab>审阅</Tab>
        <Tab>视图</Tab>
        <Tab>开发工具</Tab>
        <Tab $gap={25}>帮助</Tab>
        <Tab $size={18}>Acrobat</Tab>
        <ShareButton><ShareIcon />共享<Spacer $w={4} /><Chev /></ShareButton>
      </TabRow>

      <Ribbon>
        <ClipboardGroup />
        <FontGroup />
        <AlignGroup />
        <NumberGroup />
        <StylesGroup />
        <CellsGroup />
        <EditGroup />
        <SaveGroups />
      </Ribbon>

      <FormulaBar>
        <NameBox>SUM<Chev w={11} /></NameBox>
        <Grip><GripIcon /></Grip>
        <FxBox><CrossIcon /><CheckIcon /><FxMark>fx</FxMark></FxBox>
        <FormulaInput>=COUNT(C1:C9)<svg width="14" height="9" viewBox="0 0 14 9" fill="none" stroke="#444" strokeWidth="1.200"><path d="M1 1l6 6 6-6" /></svg></FormulaInput>
      </FormulaBar>

      <Sheet />

      <SheetBar>
        <Spacer $w={31} />
        <Slot $w={9}><Angle left /></Slot>
        <Spacer $w={32} />
        <Slot $w={9}><Angle /></Slot>
        <Spacer $w={60} />
        <SheetTab>Sheet1<TabMark /></SheetTab>
        <Spacer $w={4} />
        <Sep $h={26} />
        <Spacer $w={52} />
        <Slot $w={15}><PlusIcon /></Slot>
        <Spacer $w={861} />
        <Slot $w={3}><GripIcon c="#333" /></Slot>
        <Spacer $w={20} />
        <HTrack>
          <Spacer $w={4} />
          <SmallTriangle d="l" />
          <Spacer $w={92} />
          <HThumb />
          <Spacer $w={6} />
          <SmallTriangle d="r" />
        </HTrack>
      </SheetBar>

      <StatusBar>
        <Spacer $w={15} />
        <span>编辑</span>
        <Spacer $w={24} />
        <Slot $w={18}><MacroIcon /></Slot>
        <Spacer $w={22} />
        <Slot $w={18}><AccessIcon /></Slot>
        <Spacer $w={4} />
        <span>辅助功能: 一切就绪</span>
        <Spacer $w={1296} />
        <Slot $w={17}><ViewNormal /></Slot>
        <Spacer $w={33} />
        <Slot $w={17}><ViewLayout /></Slot>
        <Spacer $w={33} />
        <Slot $w={17}><ViewBreak /></Slot>
        <Spacer $w={22} />
        <Slot $w={12} $off>−</Slot>
        <ZoomTrack><ZoomTick /></ZoomTrack>
        <Slot $w={14} $off>+</Slot>
        <Spacer $w={12} />
        <Slot $w={40} $off>115%</Slot>
      </StatusBar>

      <TaskStrip>
        <TaskWindow><TaskRing /></TaskWindow>
      </TaskStrip>

      <Annotations width="1920" height="1039" viewBox="0 0 1920 1039">
        <defs>
          <linearGradient id="tailFade" gradientUnits="userSpaceOnUse" x1="660" y1="0" x2="915" y2="0">
            <stop offset="0" stopColor="#f23d3d" />
            <stop offset="1" stopColor="#f9c4c4" />
          </linearGradient>
        </defs>
        <path d="M420 447L436 441L437 446.500L660 480.500L800 503L912 522L912 522.500L800 506L660 488L437 454.500L434 458Z" fill="url(#tailFade)" />
        <path d="M947 572L964 582L958 586L993 640L1087 798L1086 798L981 642L953 590L948 591Z" fill="#f23d3d" />
      </Annotations>
      <RedNote>因为COUNT函数只统计数字个数</RedNote>
      <Watermark>知乎 @系统正在升级ing</Watermark>
    </Page>
  );
}
